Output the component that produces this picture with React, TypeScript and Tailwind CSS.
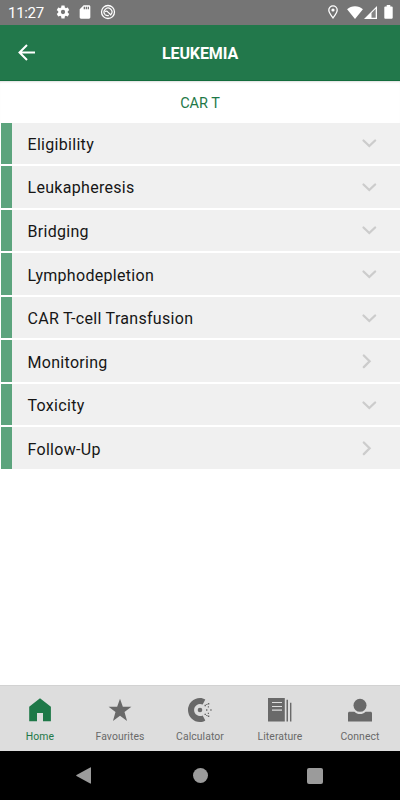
import type { ReactNode } from "react";

type Row = { label: string; open?: boolean };

const rows: Row[] = [
  { label: "Eligibility", open: true },
  { label: "Leukapheresis", open: true },
  { label: "Bridging", open: true },
  { label: "Lymphodepletion", open: true },
  { label: "CAR T-cell Transfusion", open: true },
  { label: "Monitoring" },
  { label: "Toxicity", open: true },
  { label: "Follow-Up" },
];

function StatusBar() {
  return (
    <div className="flex h-[24.5px] shrink-0 items-center bg-[#757575] pl-2 text-white">
      <span className="w-[45px] pt-[1px] text-[15px] leading-6 tracking-[-0.3px] whitespace-nowrap">11:27</span>
      <svg className="ml-[1.5px] h-4 w-4" viewBox="0 0 24 24" fill="currentColor">
        <path d="M19.14 12.94c.04-.3.06-.61.06-.94 0-.32-.02-.64-.07-.94l2.03-1.58c.18-.14.23-.41.12-.61l-1.92-3.32c-.12-.22-.37-.29-.59-.22l-2.39.96c-.5-.38-1.03-.7-1.62-.94l-.36-2.54c-.04-.24-.24-.41-.48-.41h-3.84c-.24 0-.43.17-.47.41l-.36 2.54c-.59.24-1.13.57-1.62.94l-2.39-.96c-.22-.08-.47 0-.59.22L2.74 8.87c-.12.21-.08.47.12.61l2.03 1.58c-.05.3-.09.63-.09.94s.02.64.07.94l-2.03 1.58c-.18.14-.23.41-.12.61l1.92 3.32c.12.22.37.29.59.22l2.39-.96c.5.38 1.03.7 1.62.94l.36 2.54c.05.24.24.41.48.41h3.84c.24 0 .44-.17.47-.41l.36-2.54c.59-.24 1.13-.56 1.62-.94l2.39.96c.22.08.47 0 .59-.22l1.92-3.32c.12-.22.07-.47-.12-.61l-2.01-1.58zM12 15.2A3.2 3.2 0 1 1 12 8.8a3.2 3.2 0 0 1 0 6.4z" />
      </svg>
      <svg className="ml-[6.5px] h-[16px] w-4" viewBox="0 0 24 24" fill="currentColor">
        <path d="M18 2h-8L4.02 8 4 20c0 1.1.9 2 2 2h12c1.1 0 2-.9 2-2V4c0-1.1-.9-2-2-2zm-6 6h-2V4h2v4zm3 0h-2V4h2v4zm3 0h-2V4h2v4z" />
      </svg>
      <svg className="ml-[7px] h-4 w-4" viewBox="0 0 16 16" fill="none" stroke="currentColor">
        <circle cx="8" cy="8" r="6.5" strokeWidth="1.3" />
        <path d="M11.100 10.400A3.900 3.900 0 1 0 5.200 10.700" strokeWidth="1.200" />
        <path d="M5 7.600c1.300-.8 2.300-.3 3 .5l3.200 3.200M5.200 10.700c1.200 1 2.400 1.200 3.600.7" strokeWidth="1.300" />
      </svg>
      <div className="ml-auto flex items-center pr-[7px]">
        <svg className="h-[14px] w-[10px]" viewBox="0 0 10 14" fill="none" stroke="currentColor">
          <path d="M5 13C3.800 11.300.8 8 .8 5.100a4.200 4.200 0 0 1 8.400 0C9.200 8 6.200 11.300 5 13z" strokeWidth="1.300" />
          <circle cx="5" cy="5" r="1.600" fill="currentColor" stroke="none" />
        </svg>
        <svg className="ml-[9px] h-[13px] w-4" viewBox="0 0 16 13" fill="currentColor">
          <path d="M8 13 .1 3.200C2.200 1.400 4.900.3 8 .3s5.800 1.100 7.900 2.900z" />
        </svg>
        <svg className="ml-[1px] h-[13px] w-[13px]" viewBox="0 0 13 13">
          <path d="M13 0v13H0z" fill="white" />
          <path d="M7.500 6.900 11.700 2.700v9H7.500z" fill="#858585" />
        </svg>
        <svg className="ml-[7px] h-[14px] w-[9px]" viewBox="0 0 9 14" fill="currentColor">
          <path d="M2.700 0h3.600v1.400h1.500c.5 0 .9.400.9.900v10.500c0 .5-.4.900-.9.900H1.200a.9.900 0 0 1-.9-.9V2.300c0-.5.4-.9.900-.9h1.500z" />
        </svg>
      </div>
    </div>
  );
}

function Chevron({ down }: { down?: boolean }) {
  return (
    <svg className="h-4 w-4" viewBox="0 0 16 16" fill="none" stroke="#cccccc" strokeWidth="2.300" strokeLinecap="round">
      <path d={down ? "M2.500 5.500l5.800 5.500 5.800-5.500" : "M2.800 2.500 8.600 8.300 2.800 14.100"} />
    </svg>
  );
}

function Tab({ label, active, children }: { label: string; active?: boolean; children: ReactNode }) {
  return (
    <div className={`flex w-20 flex-col items-center ${active ? "text-[#1e7848]" : "text-[#696969]"}`}>
      <svg className="mt-[12px] h-6 w-6" viewBox="0 0 24 24" fill="currentColor">
        {children}
      </svg>
      <span className="mt-[8px] text-[10.400px] leading-[14px] tracking-[0.080px] whitespace-nowrap">{label}</span>
    </div>
  );
}

export default function App() {
  return (
    <div className="flex h-[800px] w-[400px] flex-col overflow-hidden bg-white font-['Roboto',sans-serif]">
      <StatusBar />
      <header className="grid h-[56.500px] shrink-0 grid-cols-[60px_1fr_60px] items-center border-b border-[#126c3c] bg-[#22784b] text-white">
        <svg className="mt-px ml-[18px] h-[17px] w-[17px]" viewBox="0 0 17 17" fill="none" stroke="currentColor" strokeWidth="2">
          <path d="M17 8.500H2M9 1 1.500 8.500 9 16" />
        </svg>
        <h1 className="pt-[3px] text-center text-[16px] font-bold tracking-[-0.100px]">LEUKEMIA</h1>
      </header>
      <h2 className="h-[41.600px] shrink-0 pt-[1px] text-center text-[14.500px] leading-[43px] tracking-[-0.050px] text-[#1e7848] shadow-[inset_0_2px_2px_-1px_#dddddd]">CAR T</h2>
      <main className="flex flex-col gap-[2px]">
        {rows.map((row) => (
          <div key={row.label} className="ml-px flex h-[41.550px] items-center border-l-[11px] border-[#5ca47d] bg-[#f0f0f0] pr-[23px] pl-[15.500px]">
            <span className="flex-1 pt-[3px] text-[16px] leading-5 tracking-[0.300px] text-[#161616]">{row.label}</span>
            <Chevron down={row.open} />
          </div>
        ))}
      </main>
      <nav className="mt-auto flex h-[66px] shrink-0 border-t border-[#d2d2d2] bg-[#dddddd]">
        <Tab label="Home" active>
          <path d="M12 .3 22.900 8.800V23.300H15V15H9v8.300H1.200V8.800z" />
        </Tab>
        <Tab label="Favourites">
          <path d="m12 .7 2.850 8.100h8.550l-6.900 5.300 2.550 8.900L12 17.800 4.950 23l2.550-8.900-6.900-5.300h8.550z" />
        </Tab>
        <Tab label="Calculator">
          <path d="M17.300 1.600C15.800.5 14 0 12 0A12 12 0 0 0 12 24c2 0 3.800-.5 5.300-1.600l-2.600-5A6 6 0 1 1 14.700 6.600z" />
          <circle cx="12" cy="12" r="2.300" />
          <path d="M16.500 6.800H18v1.400h-1.500zM19.800 5h1.500v1.400h-1.500zM16.500 15.700H18v1.400h-1.500zM19.800 17.500h1.500v1.400h-1.500zM18 11.300h1.400v1.400H18zM19.800 8.200h1.200v1.200h-1.200zM19.800 14.700h1.200v1.200h-1.200zM22.300 11.300h1.300v1.400h-1.300zM18.200 6h1.200v1.100h-1.200zM18.200 16.900h1.200V18h-1.200z" />
        </Tab>
        <Tab label="Literature">
          <path fillRule="evenodd" d="M0 0h16.800v23.500H0zM4 4v1.100h10V4zM4 7.900v1.100h10V7.900zM4 11.600v1.100h10v-1.100zM18.500 1.800h1.500v21.700h-1.500zM22 4.800h1.400v18.700H22z" />
        </Tab>
        <Tab label="Connect">
          <circle cx="12" cy="7.300" r="6.500" />
          <path d="M1.500 13.700h4.900c3 3.200 8.200 3.200 11.200 0h4.900c.9 0 1.500.6 1.500 1.500v8.200H0v-8.200c0-.9.600-1.500 1.500-1.500z" />
        </Tab>
      </nav>
      <footer className="grid h-[49px] shrink-0 grid-cols-3 items-center justify-items-center bg-black px-[27px] text-[#9b9b9b]">
        <svg className="mr-[2px] h-[17px] w-[15px]" viewBox="0 0 15 17" fill="currentColor">
          <path d="M14.200.4c.5-.3.800 0 .8.500v15.200c0 .5-.3.800-.8.500L.5 9c-.5-.3-.5-.7 0-1z" />
        </svg>
        <span className="ml-[0.500px] h-[15px] w-[15px] rounded-full bg-[#9b9b9b]" />
        <span className="h-4 w-4 rounded-[2px] bg-[#9b9b9b]" />
      </footer>
    </div>
  );
}
